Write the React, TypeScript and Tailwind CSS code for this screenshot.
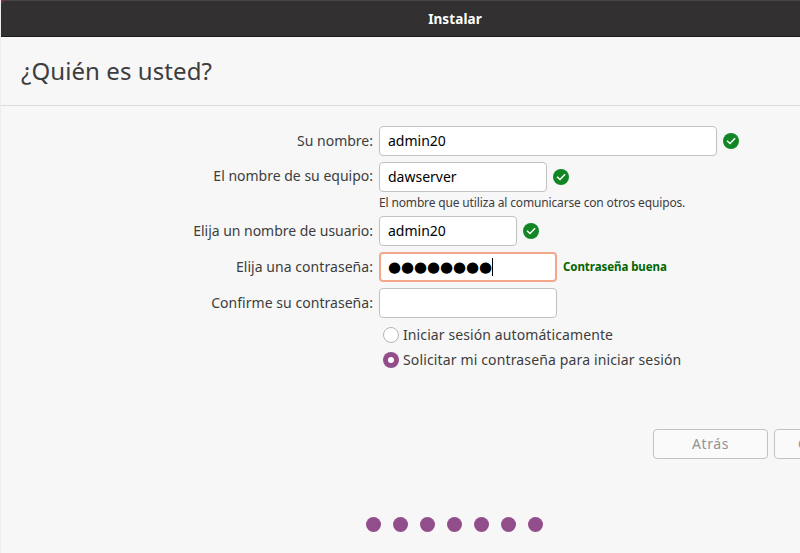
import type { ReactNode } from "react";

function Check() {
  return (
    <svg className="ml-1.5 size-4 shrink-0" viewBox="0 0 16 16" fill="none">
      <circle cx="8" cy="8" r="8" fill="#128624" />
      <path d="M4 7.7 7 10.5 12.1 5.3" stroke="#fff" strokeWidth="1.5" />
    </svg>
  );
}

function Row({ label, labelClass = "", children }: { label: string; labelClass?: string; children: ReactNode }) {
  return (
    <div className="flex h-[30px] items-center">
      <div className={`mr-1.5 w-[372px] whitespace-nowrap text-right ${labelClass}`}>{label}</div>
      {children}
    </div>
  );
}

function Field({ width, text = "" }: { width: string; text?: string }) {
  return (
    <div className={`flex h-[30px] shrink-0 items-center rounded border border-[#c4c2c0] bg-white pl-2 text-black ${width}`}>
      {text}
    </div>
  );
}

const steps = [1, 2, 3, 4, 5, 6, 7];

export default function App() {
  return (
    <div className="flex h-[553px] w-[800px] overflow-hidden bg-[#f7f7f7] font-['Noto_Sans',sans-serif] text-[14px] leading-5 text-[#3d3d3d]">
      <div className="w-px shrink-0 bg-[#ededed]" />
      <div className="flex w-[799px] shrink-0 flex-col">
        <div className="h-[37px] shrink-0 bg-[#a01b38]">
          <header className="flex h-full justify-center rounded-tl-[5px] border-t border-b border-t-[#484646] border-b-[#1c1a1a] bg-[#323030] pt-2 pl-[109px] font-bold text-white">
            <span className="text-[13.5px] tracking-[0.1px]">Instalar</span>
          </header>
        </div>
        <h1 className="h-[69px] shrink-0 border-b border-[#dcdcdc] pt-[18px] pl-5 text-[24px] leading-8 tracking-[0.08px]">¿Quién es usted?</h1>
        <main className="flex flex-col pt-5">
          <Row label="Su nombre:">
            <Field width="w-[338px]" text="admin20" />
            <Check />
          </Row>
          <div className="h-1.5" />
          <Row label="El nombre de su equipo:" labelClass="pb-0.5">
            <Field width="w-[168px]" text="dawserver" />
            <Check />
          </Row>
          <p className="h-6 pt-[3px] pl-[378px] text-[12px] leading-4 tracking-[-0.15px]">El nombre que utiliza al comunicarse con otros equipos.</p>
          <Row label="Elija un nombre de usuario:" labelClass="tracking-[-0.03px]">
            <Field width="w-[138px]" text="admin20" />
            <Check />
          </Row>
          <div className="h-1.5" />
          <Row label="Elija una contraseña:" labelClass="tracking-[0.05px]">
            <div className="flex h-[30px] w-[178px] items-center rounded border-2 border-[#f4a78c] bg-white pl-[7px] text-black">
              <span className="w-[104px] whitespace-nowrap font-['DejaVu_Sans',sans-serif] text-[15px] tracking-[-0.08px]">●●●●●●●●</span>
              <span className="h-[18px] w-px bg-black" />
            </div>
            <span className="ml-1.5 text-[11.5px] font-bold tracking-[-0.06px] text-[#006400]">Contraseña buena</span>
          </Row>
          <div className="h-1.5" />
          <Row label="Confirme su contraseña:" labelClass="tracking-[0.04px]">
            <Field width="w-[178px]" />
          </Row>
          <div className="mt-[7px] flex h-5 items-center pl-[382px]">
            <span className="mr-1 size-4 rounded-full border border-[#b8b6b4] bg-white" />
            <span className="tracking-[0.1px]">Iniciar sesión automáticamente</span>
          </div>
          <div className="mt-[5px] flex h-5 items-center pl-[382px]">
            <span className="mr-1 flex size-4 items-center justify-center rounded-full bg-[#924d8b]">
              <span className="size-[5.5px] rounded-full bg-white" />
            </span>
            <span className="tracking-[0.14px]">Solicitar mi contraseña para iniciar sesión</span>
          </div>
        </main>
        <div className="mt-[59px] flex gap-1.5 overflow-hidden pl-[652px] text-[#929292]">
          <div className="flex h-[30px] w-[115px] shrink-0 items-center justify-center rounded border border-[#c4c2c0] bg-[#fafafa] tracking-[0.6px]">Atrás</div>
          <div className="flex h-[30px] w-[115px] shrink-0 items-center rounded border border-[#c4c2c0] bg-[#fafafa] pl-[23px] text-[#929292]">Continuar</div>
        </div>
        <div className="mt-[58px] flex gap-3 pl-[365px]">
          {steps.map((s) => (
            <span key={s} className="size-[15px] rounded-full bg-[#924d8b]" />
          ))}
        </div>
      </div>
    </div>
  );
}
